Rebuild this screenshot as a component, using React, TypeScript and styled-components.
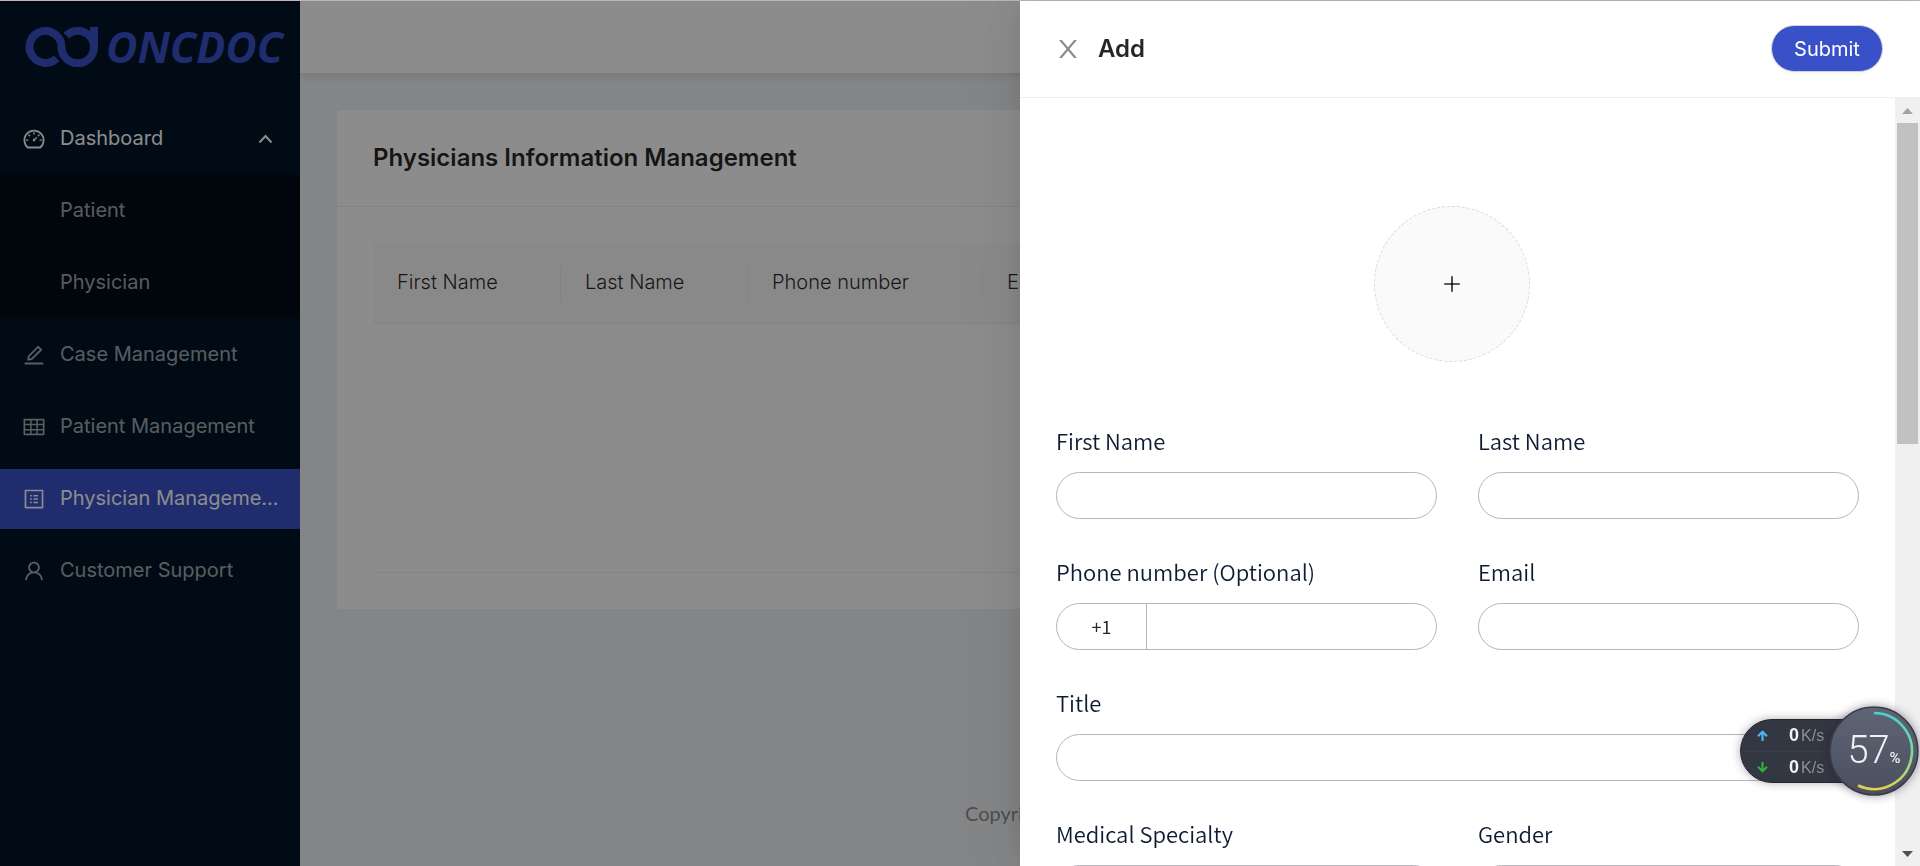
import React from 'react';
import styled, { createGlobalStyle } from 'styled-components';
import {
  AiOutlineDashboard,
  AiOutlineEdit,
  AiOutlinePlus,
  AiOutlineProfile,
  AiOutlineTable,
  AiOutlineUser,
} from 'react-icons/ai';

const sans = 'Inter, "Liberation Sans", sans-serif';
const formSans = '"Noto Sans CJK SC", "Open Sans", sans-serif';
const brand = '#3951c8';

const GlobalStyle = createGlobalStyle`
  *, *::before, *::after { box-sizing: border-box; }
  html, body, #root { height: 100%; }
  body {
    margin: 0;
    border-top: 1px solid #c4b3b0;
    overflow: hidden;
    font: 400 20px/30px ${sans};
    color: rgba(0, 0, 0, 0.85);
    background: #f0f2f5;
  }
  button, input, select { font: inherit; color: inherit; }
`;

/* ---------- Page shell ---------- */

const Shell = styled.div`
  display: flex;
  height: 100%;
`;

const Sidebar = styled.aside`
  flex: 0 0 300px;
  background: #001529;
`;

const Logo = styled.a`
  display: flex;
  align-items: center;
  gap: 8px;
  height: 102px;
  padding: 0 0 11px 25px;
  color: ${brand};
  font: italic 700 43px/40px "Open Sans", "Noto Sans", sans-serif;
  text-decoration: none;
`;

const MenuList = styled.ul`
  margin: 0;
  padding: 0;
  list-style: none;
`;

const SubMenu = styled(MenuList)`
  background: #000c17;
`;

const MenuSlot = styled.li`
  padding: 6px 0;
`;

const menuEntry = `
  display: flex;
  align-items: center;
  gap: 14px;
  width: 100%;
  height: 60px;
  border: 0;
  text-align: left;
  text-decoration: none;
`;

const MenuLink = styled.a<{ $active?: boolean; $nested?: boolean }>`
  ${menuEntry}
  padding: 0 20px 0 ${(p) => (p.$nested ? 60 : 22)}px;
  background: ${(p) => (p.$active ? brand : 'transparent')};
  color: ${(p) => (p.$active ? '#fff' : 'rgba(255, 255, 255, 0.65)')};
  svg { flex: none; }
`;

const MenuToggle = styled.button`
  ${menuEntry}
  padding: 0 27px 0 22px;
  background: transparent;
  color: #fff;
  svg { flex: none; }
`;

const MenuText = styled.span`
  flex: 1;
  min-width: 0;
  padding-bottom: 3px;
  overflow: hidden;
  white-space: nowrap;
`;

const Content = styled.div`
  flex: 1;
  min-width: 0;
  display: flex;
  flex-direction: column;
`;

const TopBar = styled.header`
  flex: 0 0 72px;
  background: #fff;
  box-shadow: 0 2px 10px rgba(0, 21, 41, 0.12);
`;

const Main = styled.main`
  flex: 1;
  padding: 37px;
`;

const Card = styled.section`
  background: #fff;
  border-radius: 3px;
`;

const CardTitle = styled.h1`
  margin: 0;
  padding: 30px 36px;
  border-bottom: 1px solid #f0f0f0;
  font-size: 24px;
  font-weight: 600;
  line-height: 36px;
`;

const CardBody = styled.div`
  padding: 36px;
`;

const TableArea = styled.div`
  min-height: 330px;
  border-bottom: 1px solid #f0f0f0;
`;

const Table = styled.table`
  width: 100%;
  table-layout: fixed;
  border-collapse: separate;
  border-spacing: 0;
`;

const HeadCell = styled.th<{ $width?: number }>`
  position: relative;
  width: ${(p) => (p.$width ? `${p.$width}px` : 'auto')};
  height: 81px;
  padding: 0 24px 2px;
  background: #fafafa;
  border-bottom: 1px solid #f0f0f0;
  font-weight: 300;
  text-align: left;
  white-space: nowrap;

  &:not(:last-child)::before {
    content: '';
    position: absolute;
    top: 23px;
    right: 0;
    width: 1px;
    height: 34px;
    background: #ededed;
  }
`;

const Footer = styled.footer`
  padding: 0 0 38px;
  color: rgba(0, 0, 0, 0.45);
  font-family: Lato, ${sans};
  text-align: center;
`;

/* ---------- Drawer ---------- */

const Mask = styled.div`
  position: fixed;
  inset: 1px 0 0;
  display: flex;
  justify-content: flex-end;
  background: rgba(0, 0, 0, 0.45);
`;

const Drawer = styled.section`
  display: flex;
  flex-direction: column;
  width: 900px;
  max-width: 100%;
  background: #fff;
  box-shadow:
    -8px 0 20px -10px rgba(0, 0, 0, 0.08),
    -11px 0 35px 0 rgba(0, 0, 0, 0.05),
    -15px 0 60px 20px rgba(0, 0, 0, 0.03);
`;

const DrawerHeader = styled.header`
  flex: none;
  display: flex;
  align-items: center;
  height: 97px;
  padding: 0 36px 1px 34px;
  border-bottom: 1px solid #f0f0f0;
`;

const CloseButton = styled.button`
  display: flex;
  margin-right: 16px;
  padding: 0;
  border: 0;
  background: none;
  color: rgba(0, 0, 0, 0.45);
`;

const DrawerTitle = styled.h2`
  flex: 1;
  margin: 0;
  font-size: 24px;
  font-weight: 600;
  line-height: 36px;
`;

const SubmitButton = styled.button`
  width: 112px;
  height: 47px;
  margin-right: 1px;
  padding: 0;
  border: 1px solid #d4d4d8;
  border-radius: 24px;
  background: ${brand};
  color: #fff;
  box-shadow: 0 3px 0 rgba(0, 0, 0, 0.02);
`;

const DrawerBody = styled.div`
  flex: 1;
  min-height: 0;
  display: flex;
`;

const Form = styled.form`
  flex: 1;
  min-width: 0;
  overflow: hidden;
  padding: 108px 36px 36px;
  font-family: ${formSans};
`;

const UploadRow = styled.div`
  display: flex;
  justify-content: center;
  padding-right: 12px;
  margin-bottom: 61px;
`;

const UploadButton = styled.button`
  display: flex;
  align-items: center;
  justify-content: center;
  width: 156px;
  height: 156px;
  border: 1px dashed #d9d9d9;
  border-radius: 50%;
  background: #fafafa;
`;

const FieldGrid = styled.div`
  display: grid;
  grid-template-columns: 1fr 1fr;
  gap: 35px 41px;
`;

const Field = styled.div<{ $wide?: boolean }>`
  grid-column: ${(p) => (p.$wide ? '1 / -1' : 'auto')};
  display: flex;
  flex-direction: column;
  gap: 15px;
`;

const Label = styled.label`
  color: #0e1c33;
  font-size: 22px;
  font-weight: 350;
  line-height: 34px;
`;

const controlBox = `
  width: 100%;
  height: 47px;
  border: 1px solid #b5b6bd;
  border-radius: 24px;
  background: #fff;
`;

const TextInput = styled.input`
  ${controlBox}
  padding: 0 24px;
  outline: none;
`;

const Select = styled.select`
  ${controlBox}
  padding: 0 24px;
  appearance: none;
`;

const PhoneGroup = styled.div`
  ${controlBox}
  display: flex;
  overflow: hidden;
`;

const PhonePrefix = styled.span`
  flex: 0 0 90px;
  border-right: 1px solid #b5b6bd;
  font-size: 18px;
  line-height: 44px;
  text-align: center;
`;

const PhoneInput = styled.input`
  flex: 1;
  min-width: 0;
  padding: 0 18px;
  border: 0;
  outline: none;
  background: transparent;
`;

const ScrollRail = styled.div`
  flex: 0 0 25px;
  display: flex;
  flex-direction: column;
  align-items: center;
  justify-content: space-between;
  background: #f0f0f0;
`;

const ScrollTop = styled.div`
  width: 100%;
  height: 45%;
  display: flex;
  flex-direction: column;
  align-items: center;
`;

const ScrollArrow = styled.svg`
  flex: none;
  width: 25px;
  height: 25px;
`;

const ScrollThumb = styled.div`
  flex: 1;
  width: 21px;
  background: #c1c1c1;
`;

/* ---------- Network monitor ---------- */

const Monitor = styled.aside`
  position: fixed;
  right: 1px;
  bottom: 70px;
  display: flex;
  align-items: center;
  font-family: "Liberation Sans", Arial, sans-serif;
`;

const SpeedPill = styled.div`
  width: 114px;
  height: 64px;
  margin-right: -25px;
  border: 1px solid #23262e;
  border-radius: 32px 0 0 32px;
  background: rgba(43, 47, 58, 0.96);
  box-shadow: 0 0 10px rgba(40, 20, 50, 0.35);
`;

const SpeedRow = styled.div`
  display: flex;
  align-items: center;
  height: 31px;
  padding-left: 15px;
  font-size: 16px;
  line-height: 31px;
  color: #8b8e95;

  & + & { border-top: 1px solid #393d47; }

  svg { margin-right: 20px; }
  strong { margin-right: 2px; color: #f2f2f2; font-size: 18px; }
`;

const Gauge = styled.div`
  display: grid;
  width: 90px;
  height: 90px;
  border-radius: 50%;
  box-shadow: 0 0 10px rgba(40, 20, 50, 0.45);

  > * { grid-area: 1 / 1; }
`;

const GaugeValue = styled.div`
  position: relative;
  display: flex;
  align-items: baseline;
  justify-content: center;
  color: #f1f1f3;
  font: 300 38px/88px Roboto, sans-serif;

  small { font: 500 15px/16px Roboto, sans-serif; }
`;

const LogoMark = () => (
  <svg width="73" height="40" viewBox="0 0 73 40" fill="none" stroke="currentColor" strokeWidth="8" aria-hidden="true">
    <path d="M31.6 31.4A16 16 0 1 1 36.5 20A16 16 0 0 0 69 20A16.2 16.2 0 0 0 41.4 8.6M69 20V0" />
  </svg>
);

const CloseMark = () => (
  <svg width="28" height="28" viewBox="0 0 1024 1024" fill="currentColor" aria-hidden="true">
    <path d="M563.8 512l262.5-312.9c4.4-5.2.7-13.1-6.1-13.1h-79.8c-4.7 0-9.2 2.1-12.3 5.7L511.6 449.8 295.1 191.7c-3-3.6-7.5-5.7-12.3-5.7H203c-6.8 0-10.5 7.9-6.1 13.1L459.4 512 196.9 824.9A7.95 7.95 0 0 0 203 838h79.8c4.7 0 9.2-2.1 12.3-5.7l216.5-258.1 216.5 258.1c3 3.6 7.5 5.7 12.3 5.7h79.8c6.8 0 10.5-7.9 6.1-13.1L563.8 512z" />
  </svg>
);

const FieldInput = ({ id, label, wide }: { id: string; label: string; wide?: boolean }) => (
  <Field $wide={wide}>
    <Label htmlFor={id}>{label}</Label>
    <TextInput id={id} type="text" />
  </Field>
);

const FieldSelect = ({ id, label }: { id: string; label: string }) => (
  <Field>
    <Label htmlFor={id}>{label}</Label>
    <Select id={id} />
  </Field>
);

const menuItems = [
  { text: 'Case Management', Icon: AiOutlineEdit },
  { text: 'Patient Management', Icon: AiOutlineTable },
  { text: 'Physician Manageme...', Icon: AiOutlineProfile, active: true },
  { text: 'Customer Support', Icon: AiOutlineUser },
];

export default function App() {
  return (
    <>
      <GlobalStyle />
      <Shell>
        <Sidebar>
          <Logo href="#home">
            <LogoMark />
            ONCDOC
          </Logo>
          <nav>
            <MenuList>
              <li>
                <MenuSlot as="div">
                  <MenuToggle type="button" aria-expanded="true">
                    <AiOutlineDashboard size={24} />
                    <MenuText>Dashboard</MenuText>
                    <svg width="15" height="10" viewBox="0 0 15 10" fill="none" stroke="#fff" strokeWidth="2" aria-hidden="true">
                      <path d="M1.5 8.5L7.5 2L13.5 8.5" />
                    </svg>
                  </MenuToggle>
                </MenuSlot>
                <SubMenu>
                  <MenuSlot><MenuLink $nested href="#patient"><MenuText>Patient</MenuText></MenuLink></MenuSlot>
                  <MenuSlot><MenuLink $nested href="#physician"><MenuText>Physician</MenuText></MenuLink></MenuSlot>
                </SubMenu>
              </li>
              {menuItems.map(({ text, Icon, active }) => (
                <MenuSlot key={text}>
                  <MenuLink href="#menu" $active={active}>
                    <Icon size={24} />
                    <MenuText>{text}</MenuText>
                  </MenuLink>
                </MenuSlot>
              ))}
            </MenuList>
          </nav>
        </Sidebar>

        <Content>
          <TopBar />
          <Main>
            <Card>
              <CardTitle>Physicians Information Management</CardTitle>
              <CardBody>
                <TableArea>
                  <Table>
                    <thead>
                      <tr>
                        <HeadCell $width={188}>First Name</HeadCell>
                        <HeadCell $width={187}>Last Name</HeadCell>
                        <HeadCell $width={235}>Phone number</HeadCell>
                        <HeadCell>Email</HeadCell>
                      </tr>
                    </thead>
                  </Table>
                </TableArea>
              </CardBody>
            </Card>
          </Main>
          <Footer>Copyright © 2021 ONCDOC Inc.</Footer>
        </Content>
      </Shell>

      <Mask>
        <Drawer role="dialog" aria-labelledby="drawer-title">
          <DrawerHeader>
            <CloseButton type="button" aria-label="Close">
              <CloseMark />
            </CloseButton>
            <DrawerTitle id="drawer-title">Add</DrawerTitle>
            <SubmitButton type="submit" form="physician-form">Submit</SubmitButton>
          </DrawerHeader>
          <DrawerBody>
            <Form id="physician-form">
              <UploadRow>
                <UploadButton type="button" aria-label="Upload photo">
                  <AiOutlinePlus size={22} />
                </UploadButton>
              </UploadRow>
              <FieldGrid>
                <FieldInput id="first-name" label="First Name" />
                <FieldInput id="last-name" label="Last Name" />
                <Field>
                  <Label htmlFor="phone">Phone number (Optional)</Label>
                  <PhoneGroup>
                    <PhonePrefix>+1</PhonePrefix>
                    <PhoneInput id="phone" type="tel" />
                  </PhoneGroup>
                </Field>
                <FieldInput id="email" label="Email" />
                <FieldInput id="title" label="Title" wide />
                <FieldSelect id="specialty" label="Medical Specialty" />
                <FieldSelect id="gender" label="Gender" />
              </FieldGrid>
            </Form>
            <ScrollRail aria-hidden="true">
              <ScrollTop>
                <ScrollArrow viewBox="0 0 25 25"><path d="M7 16L12.5 10L18 16Z" fill="#a3a3a3" /></ScrollArrow>
                <ScrollThumb />
              </ScrollTop>
              <ScrollArrow viewBox="0 0 25 25"><path d="M7 10L12.5 16L18 10Z" fill="#505050" /></ScrollArrow>
            </ScrollRail>
          </DrawerBody>
        </Drawer>
      </Mask>

      <Monitor>
        <SpeedPill>
          <SpeedRow>
            <svg width="13" height="12" viewBox="0 0 13 12" fill="none" stroke="#4fb4f4" strokeWidth="2.2" aria-hidden="true">
              <path d="M6.5 11V2M2 6.2L6.5 1.8L11 6.2" />
            </svg>
            <strong>0</strong>K/s
          </SpeedRow>
          <SpeedRow>
            <svg width="13" height="12" viewBox="0 0 13 12" fill="none" stroke="#2fae40" strokeWidth="2.2" aria-hidden="true">
              <path d="M6.5 1V10M2 5.8L6.5 10.2L11 5.8" />
            </svg>
            <strong>0</strong>K/s
          </SpeedRow>
        </SpeedPill>
        <Gauge>
          <svg width="90" height="90" viewBox="0 0 90 90" fill="none" aria-hidden="true">
            <defs>
              <linearGradient id="gauge-arc" x1="0" y1="0" x2="0" y2="1">
                <stop offset="0" stopColor="#45d3d6" />
                <stop offset="0.55" stopColor="#7fdc95" />
                <stop offset="1" stopColor="#e0d050" />
              </linearGradient>
              <linearGradient id="gauge-face" x1="0" y1="0" x2="0" y2="1">
                <stop offset="0" stopColor="#5f6575" />
                <stop offset="1" stopColor="#4a4f5e" />
              </linearGradient>
            </defs>
            <circle cx="45" cy="45" r="44" fill="url(#gauge-face)" stroke="#383c47" strokeWidth="1.5" />
            <path d="M45 7A38 38 0 1 1 29 79.5" stroke="url(#gauge-arc)" strokeWidth="2.6" />
          </svg>
          <GaugeValue>57<small>%</small></GaugeValue>
        </Gauge>
      </Monitor>
    </>
  );
}
